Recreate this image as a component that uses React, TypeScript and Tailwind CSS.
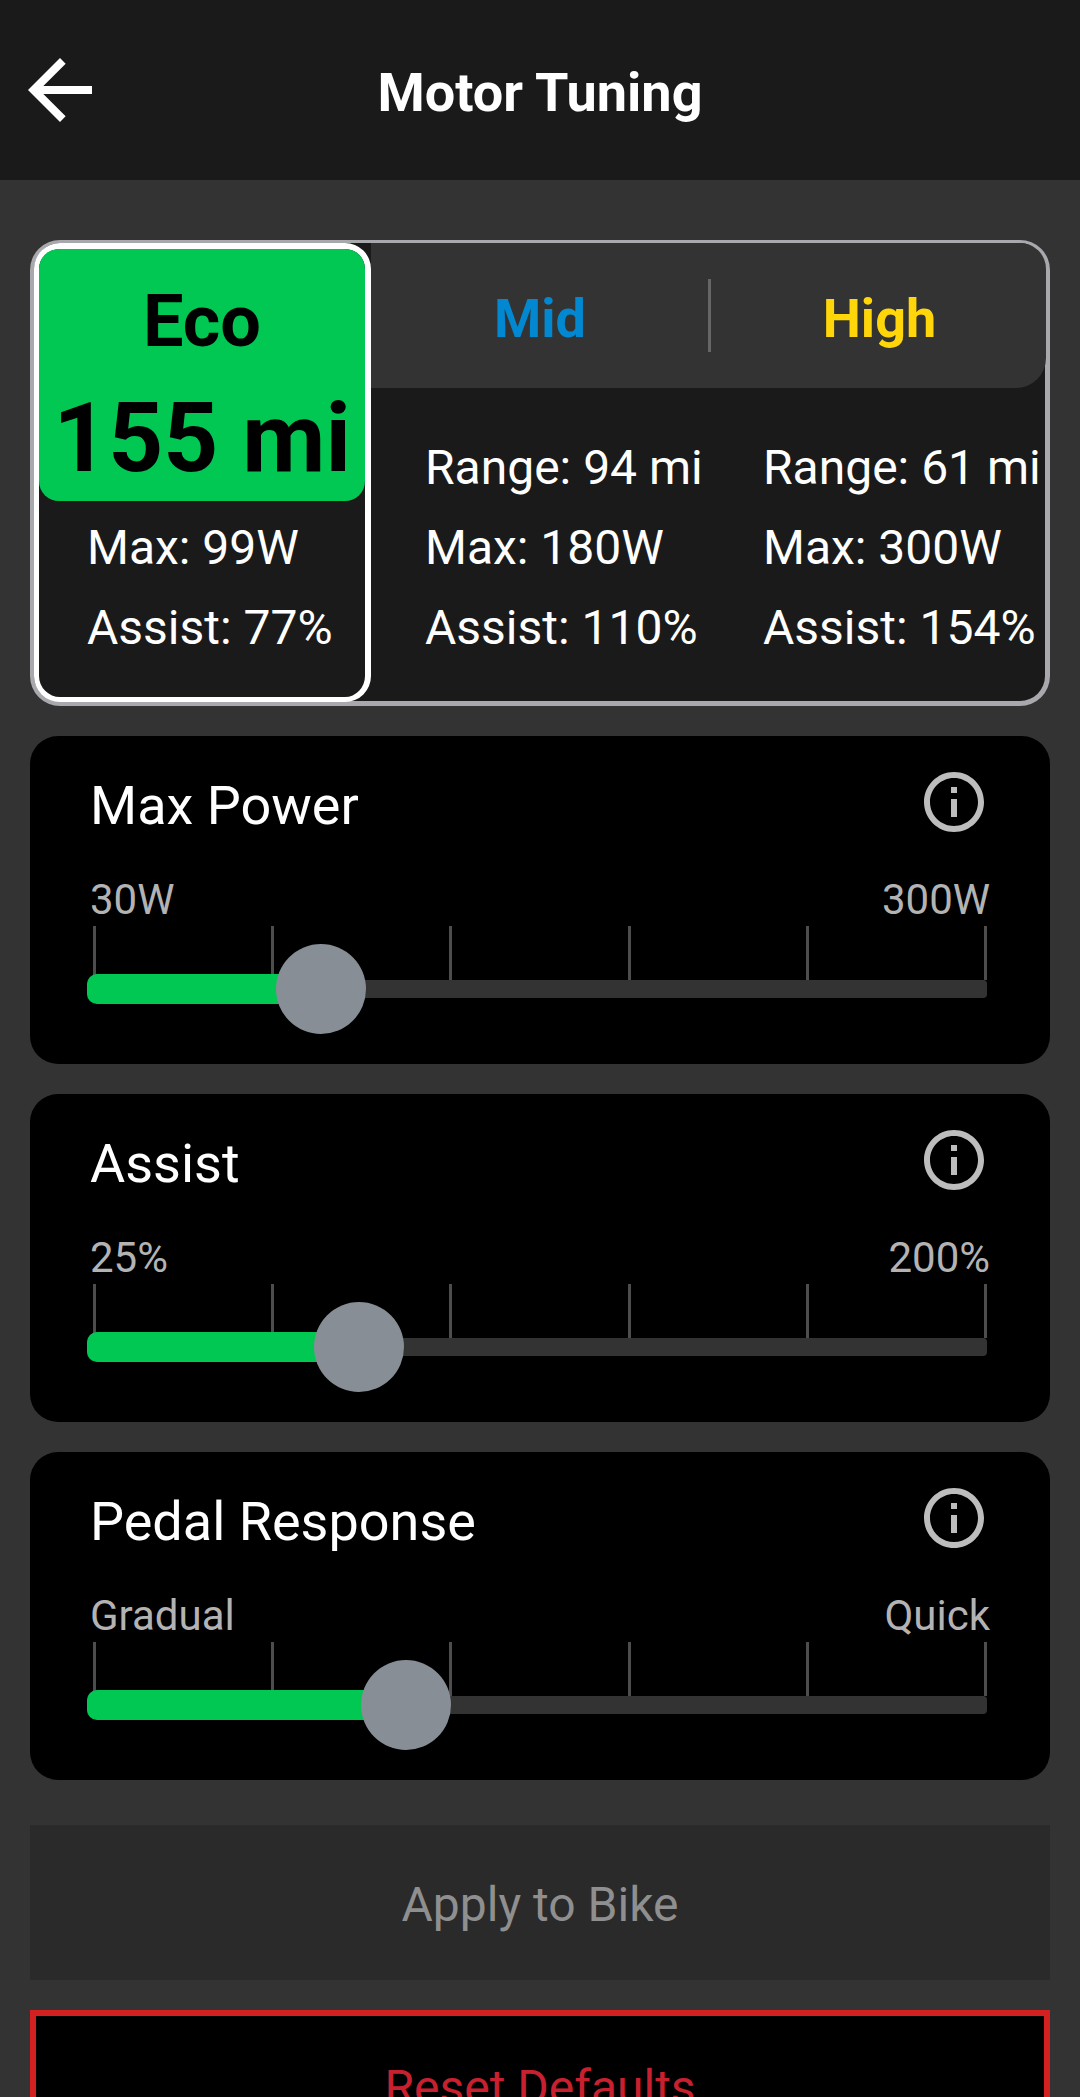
const font = { fontFamily: "Roboto, sans-serif" };

function ArrowBack() {
  return (
    <svg viewBox="0 0 24 24" className="w-[96px] h-[96px] fill-white">
      <path d="M20 11H7.83l5.59-5.59L12 4l-8 8 8 8 1.41-1.41L7.83 13H20v-2z" />
    </svg>
  );
}

function InfoIcon() {
  return (
    <svg viewBox="2 2 20 20" className="w-[60px] h-[60px] fill-[#bdbdbd]">
      <path d="M11 7h2v2h-2zm0 4h2v6h-2zm1-9C6.48 2 2 6.48 2 12s4.48 10 10 10 10-4.48 10-10S17.52 2 12 2zm0 18c-4.41 0-8-3.59-8-8s3.59-8 8-8 8 3.59 8 8-3.59 8-8 8z" />
    </svg>
  );
}

function Stats({ lines }: { lines: string[] }) {
  return (
    <div className="text-[48px] leading-[80px] text-white whitespace-nowrap">
      {lines.map((l) => (
        <div key={l}>{l}</div>
      ))}
    </div>
  );
}

function ModeColumn({ label, color, lines, last }: { label: string; color: string; lines: string[]; last?: boolean }) {
  return (
    <div className={`shrink-0 ${last ? "w-[337px]" : "w-[338px]"}`}>
      <div className={`h-[145px] bg-[#333333] flex items-center ${last ? "rounded-br-[30px] rounded-tr-[26px]" : ""}`}>
        {last && <div className="w-[3px] h-[73px] -ml-[1px] bg-[#666666]" />}
        <div className={`flex-1 text-center text-[54px] font-bold leading-[63px] pt-[5px] ${last ? "pl-[2px]" : ""} ${color}`}>{label}</div>
      </div>
      <div className="pt-[40px] pl-[54px]">
        <Stats lines={lines} />
      </div>
    </div>
  );
}

function SliderCard({ title, min, max, fill }: { title: string; min: string; max: string; fill: number }) {
  return (
    <div className="h-[328px] bg-black rounded-[28px] pt-[36px] px-[60px]">
      <div className="flex items-center justify-between h-[60px]">
        <span className="text-[54px] leading-[63px] text-white pt-[6px]">{title}</span>
        <span className="mr-[6px]">
          <InfoIcon />
        </span>
      </div>
      <div className="flex justify-between text-[42px] leading-[49px] text-[#b3b3b3] mt-[43px] mb-[2px]">
        <span>{min}</span>
        <span>{max}</span>
      </div>
      <div className="w-[900px] -ml-[3px]">
        <div className="flex justify-between pl-[6px] h-[54px]">
          {[0, 1, 2, 3, 4, 5].map((i) => (
            <div key={i} className="w-[3px] h-full bg-[#4d4d4d]" />
          ))}
        </div>
        <div className="relative h-[18px] bg-[#333333] rounded-[4px]">
          <div className="absolute left-0 top-[-6px] h-[30px] bg-[#00c853] rounded-[10px]" style={{ width: fill }} />
          <div className="absolute top-[-36px] w-[90px] h-[90px] rounded-full bg-[#878e96]" style={{ left: fill - 45 }} />
        </div>
      </div>
    </div>
  );
}

export default function App() {
  return (
    <div className="w-[1080px] h-[2097px] overflow-hidden bg-[#333333]" style={font}>
      <header className="h-[180px] bg-[#1a1a1a] flex items-center px-[12px]">
        <ArrowBack />
        <h1 className="flex-1 text-center text-[54px] font-bold leading-[63px] text-white pt-[4px]">Motor Tuning</h1>
        <div className="w-[96px]" />
      </header>

      <main className="px-[30px] pt-[60px] flex flex-col">
        <section className="relative h-[466px] rounded-[30px] border-t-[3px] border-l-[4px] border-r-[5px] border-b-[5px] border-[#a8a8ad] bg-[#1a1a1a] flex">
          <div className="w-[337px] h-[459px] shrink-0 rounded-[26px] border-t-[6px] border-b-[5px] border-l-[5px] border-r-[6px] border-white bg-[#1a1a1a] z-10">
            <div className="h-[252px] bg-[#00c853] rounded-[20px] text-black font-bold text-center pt-[31px]">
              <div className="text-[72px] leading-[84px]">Eco</div>
              <div className="text-[96px] leading-[112px] mt-[18px] whitespace-nowrap">155 mi</div>
            </div>
            <div className="pt-[7px] pl-[48px]">
              <Stats lines={["Max: 99W", "Assist: 77%"]} />
            </div>
          </div>
          <ModeColumn label="Mid" color="text-[#0288d1]" lines={["Range: 94 mi", "Max: 180W", "Assist: 110%"]} />
          <ModeColumn label="High" color="text-[#ffd60a]" lines={["Range: 61 mi", "Max: 300W", "Assist: 154%"]} last />
        </section>

        <div className="flex flex-col gap-[30px] mt-[30px]">
          <SliderCard title="Max Power" min="30W" max="300W" fill={234} />
          <SliderCard title="Assist" min="25%" max="200%" fill={272} />
          <SliderCard title="Pedal Response" min="Gradual" max="Quick" fill={319} />
        </div>

        <button className="h-[155px] mt-[45px] pt-[4px] bg-[#2a2a2a] text-[48px] text-[#8f8f8f]">Apply to Bike</button>
        <button className="h-[155px] shrink-0 mt-[30px] bg-black border-[6px] border-[#d32020] text-[48px] text-[#c8202f]">Reset Defaults</button>
      </main>
    </div>
  );
}
